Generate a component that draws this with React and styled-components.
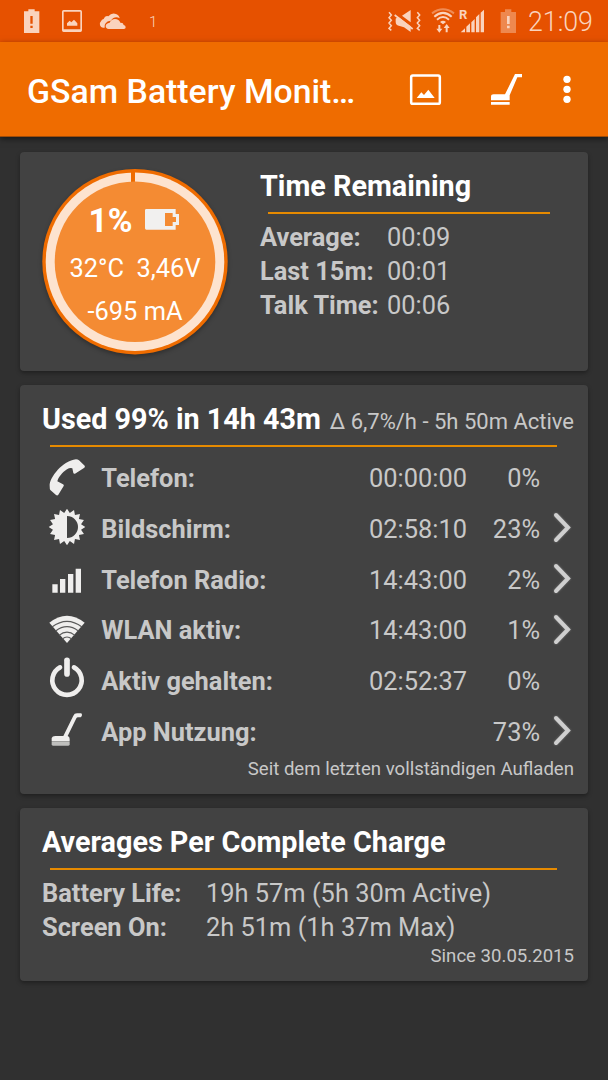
import styled, { createGlobalStyle } from 'styled-components';

const GlobalStyle = createGlobalStyle`
  body {
    margin: 0;
    background: #303030;
    font-family: Roboto, sans-serif;
    color: #c8c8c8;
  }
  svg {
    display: block;
    flex: none;
    overflow: visible;
  }
`;

const Screen = styled.div`
  width: 608px;
  height: 1080px;
  overflow: hidden;
  background: #303030;
`;

const StatusBar = styled.div`
  display: flex;
  justify-content: space-between;
  height: 42px;
  padding: 0 15px 0 23px;
  background: #e65100;
  color: #fad3bd;
  fill: #fad3bd;
  stroke: none;
`;

const StatusGroup = styled.div`
  display: flex;
  align-items: center;
`;

const StatusIcon = styled.svg`
  width: ${(p) => p.$w}px;
  height: 42px;
  margin-right: ${(p) => p.$gap}px;
`;

const Count = styled.span`
  font-size: 15px;
  font-weight: 300;
  line-height: 42px;
  padding-top: 2px;
`;

const Roaming = styled.span`
  align-self: flex-start;
  width: 0;
  margin-top: 8px;
  font-size: 13px;
  font-weight: 700;
  line-height: 14px;
`;

const Clock = styled.span`
  font-size: 26.8px;
  font-weight: 300;
  line-height: 42px;
  padding-top: 2px;
`;

const AppBar = styled.header`
  display: flex;
  align-items: center;
  height: 94px;
  padding-left: 27px;
  background: #ef6c00;
  border-bottom: 1px solid #a04c08;
  box-shadow: 0 2px 6px rgba(0, 0, 0, 0.5);
  color: #fff;
  fill: #fff;
`;

const AppTitle = styled.h1`
  width: 382px;
  margin: 0;
  padding-top: 5px;
  font-size: 33.8px;
  font-weight: 500;
  line-height: 40px;
`;

const ActionIcon = styled.svg`
  width: ${(p) => p.$w}px;
  height: 94px;
  margin-right: ${(p) => p.$gap}px;
`;

const Cards = styled.main`
  display: flex;
  flex-direction: column;
  gap: 14px;
  padding: 15px 20px;
`;

const Card = styled.section`
  box-sizing: border-box;
  height: ${(p) => p.$height}px;
  padding: 17px 14px 0 22px;
  border-radius: 4px;
  background: #424242;
  box-shadow: 0 2px 4px rgba(0, 0, 0, 0.35);
`;

const Split = styled.div`
  display: grid;
  grid-template-columns: 186px 1fr;
  column-gap: 32px;
`;

const Heading = styled.div`
  display: flex;
  justify-content: space-between;
  align-items: baseline;
  height: 34px;
  line-height: 34px;
  white-space: nowrap;
`;

const Title = styled.h2`
  margin: 0;
  font-size: 28.75px;
  font-weight: 700;
  color: #fff;
`;

const Detail = styled.span`
  font-size: 22px;
`;

const Rule = styled.hr`
  height: 2px;
  margin: 9px ${(p) => p.$right}px 6px 8.4px;
  border: 0;
  background: #e68a00;
`;

const Stat = styled.div`
  display: grid;
  grid-template-columns: ${(p) => p.$label}px 1fr;
  height: 34px;
  font-size: 25.4px;
  line-height: 34px;
  white-space: nowrap;
`;

const Label = styled.span`
  font-weight: 700;
`;

const Usage = styled.div`
  display: grid;
  grid-template-columns: 38px 200px 1fr 73px 34px;
  align-items: center;
  height: 50.67px;
  padding-left: 6px;
  font-size: 25.4px;
  line-height: 34px;
  white-space: nowrap;
`;

const UsageLabel = styled(Label)`
  padding-left: 15.3px;
`;

const Figure = styled.span`
  text-align: right;
`;

const UsageIcon = styled.svg`
  width: 38px;
  height: 38px;
  margin-top: -3px;
  fill: #efeeed;
  stroke: none;
`;

const Chevron = styled.svg`
  width: 18px;
  height: 32px;
  margin: -3px 0 0 13px;
  fill: none;
  stroke: #cfcfcf;
  stroke-width: 4;
  stroke-linecap: round;
  filter: drop-shadow(0 0 1px rgba(230, 230, 230, 0.35));
`;

const Footnote = styled.div`
  font-size: 18.6px;
  line-height: 24px;
  text-align: right;
`;

const Dial = styled.div`
  display: grid;
  width: 186px;
  height: 186px;
  color: #fff;
  > * {
    grid-area: 1 / 1;
  }
`;

const DialFace = styled.svg`
  width: 186px;
  height: 186px;
  filter: drop-shadow(0 2px 2px rgba(0, 0, 0, 0.3));
`;

const Readout = styled.div`
  position: relative;
  display: flex;
  flex-direction: column;
  align-items: center;
  padding-top: 27px;
  font-size: 25.4px;
  line-height: 43px;
  white-space: pre;
`;

const Charge = styled.div`
  display: flex;
  align-items: center;
  gap: 12px;
  height: 49px;
  margin-bottom: 2px;
  padding-right: 3px;
  font-size: 33.5px;
  font-weight: 700;

  svg {
    margin-top: -3px;
  }
`;

const usage = [
  { label: 'Telefon:', time: '00:00:00', pct: '0%', icon: 'phone' },
  { label: 'Bildschirm:', time: '02:58:10', pct: '23%', icon: 'screen', more: true },
  { label: 'Telefon Radio:', time: '14:43:00', pct: '2%', icon: 'radio', more: true },
  { label: 'WLAN aktiv:', time: '14:43:00', pct: '1%', icon: 'wlan', more: true },
  { label: 'Aktiv gehalten:', time: '02:52:37', pct: '0%', icon: 'power' },
  { label: 'App Nutzung:', time: '', pct: '73%', icon: 'apps', more: true },
];

// 16 pointed star around the screen brightness disc
const star = Array.from({ length: 32 }, (_, i) => {
  const r = i % 2 ? 43 : 55;
  const a = (i * Math.PI) / 16;
  return `${57 + r * Math.sin(a)},${57 - r * Math.cos(a)}`;
}).join(' ');

const icons = {
  phone: (
    <path d="M5 84C4 58 45 8 84 4Q89 4 93 7L110 23Q112 26 109 29L81 47Q77 48 76 45L73 31Q66 28 57 34C43 43 31 58 28 70L45 79Q49 81 47 84L31 110Q28 114 24 111L7 96Q5 94 5 84Z" />
  ),
  screen: (
    <path
      fillRule="evenodd"
      d={`M${star}ZM57 24V90A33 33 0 0 0 57 24Z`}
    />
  ),
  radio: (
    <path d="M13 76h16v25H13zM36 60h16v41H36zM60 45h16v56H60zM83 29h16v72H83z" />
  ),
  wlan: (
    <>
      <path d="M57 99L4 38Q57-4 110 38Z" />
      <g fill="none" stroke="#5a5a5a" strokeWidth="3.5">
        <path d="M12 51Q57 17 102 51M23 63Q57 37 91 63M33 76Q57 57 81 76M43 87Q57 75 71 87" />
      </g>
    </>
  ),
  power: (
    <g fill="none" stroke="#efeeed" strokeWidth="14" strokeLinecap="round">
      <path d="M36 22A44 44 0 1 0 78 22" />
      <path d="M57 1V42" strokeWidth="17" />
    </g>
  ),
  apps: (
    <>
      <path d="M11 81Q13 75 22 75H46L76 14Q79 7 87 7H99Q102 8 102 12T98 19H89Q86 19 84 24L59 75Q65 77 65 84V90H11Z" />
      <path d="M11 91H65V100Q65 104 61 104H15Q11 104 11 100Z" fill="#bfbfbd" />
    </>
  ),
};

const App = () => {
  return (
    <Screen>
      <GlobalStyle />
      <StatusBar>
        <StatusGroup>
          <StatusIcon $w={17} $gap={21} viewBox="69 0 51 126">
            <path fillRule="evenodd" d="M72 34H85V28H104V34H118V99H72ZM91 48V71H98V48ZM91 77V84H98V77Z" />
          </StatusIcon>
          <StatusIcon $w={22} $gap={16} viewBox="183 0 66 126">
            <path fillRule="evenodd" d="M191 30H241Q246 30 246 35V91Q246 96 241 96H191Q186 96 186 91V35Q186 30 191 30ZM191 35V88H241V35ZM201 77V70L209 62L214 67L222 59L232 70V77Z" />
          </StatusIcon>
          <StatusIcon $w={28} $gap={22} viewBox="297 0 84 126">
            <path d="M314 83H309A11 11 0 0 1 303 64Q305 58 311 57Q315 46 325 49Q335 37 348 42Q358 46 359 55Q350 49 340 54Q335 58 333 62Q322 61 317 70Q312 76 314 83Z" />
            <path d="M326 87Q317 86 317 78T329 68Q334 57 345 57Q357 57 361 68Q370 67 371 75Q377 76 377 82T370 87Z" />
          </StatusIcon>
          <Count>1</Count>
        </StatusGroup>
        <StatusGroup>
          <StatusIcon $w={34} $gap={10} viewBox="252 0 102 126">
            <path d="M278 56L285 50L323 79V96L303 82L290 78Q278 76 278 66ZM297 47L323 30V67Z" />
            <g fill="none" stroke="#fad3bd">
              <path d="M275 45L329 87" strokeWidth="5" />
              <path d="M258 37L265 45L258 53L265 61L258 69L265 77L258 85L265 91M343 37L350 45L343 53L350 61L343 69L350 77L343 85L350 91" strokeWidth="4.5" />
            </g>
          </StatusIcon>
          <StatusIcon $w={24} $gap={4} viewBox="384 0 72 126">
            <g fill="none" stroke="#fad3bd" strokeWidth="6">
              <path d="M387 40Q420 16 453 40" opacity=".45" />
              <path d="M394 50Q420 27 446 50M402 59Q420 43 438 59" />
            </g>
            <path d="M411 66Q420 59 429 66L420 73ZM406 75H412V86H418L409 98L400 86H406ZM428 97H434V84H440L431 72L422 84H428Z" />
          </StatusIcon>
          <Roaming>R</Roaming>
          <StatusIcon $w={26} $gap={15} viewBox="468 0 78 126">
            <path d="M473 97L486 85V97ZM490 80L501 70V97H490ZM505 67L515 57V97H505ZM519 52L529 42V97H519ZM533 38L543 29V97H533Z" />
          </StatusIcon>
          <StatusIcon $w={16} $gap={12} viewBox="591 0 48 126">
            <path d="M593 36H606V28H625V36H639V99H593Z" opacity=".42" />
            <path d="M612 48H620V72H612ZM612 77H620V85H612Z" />
          </StatusIcon>
          <Clock>21:09</Clock>
        </StatusGroup>
      </StatusBar>
      <AppBar>
        <AppTitle>GSam Battery Monit…</AppTitle>
        <ActionIcon $w={33} $gap={48} viewBox="315 126 99 282">
          <rect x="321.5" y="226.5" width="86" height="85" rx="5" fill="none" stroke="#fff" strokeWidth="7.5" />
          <path d="M338 294L352 277L360 285L373 269L392 294Z" />
        </ActionIcon>
        <ActionIcon $w={33} $gap={40} viewBox="558 126 99 282">
          <path d="M561 301V290Q561 283 569 283H603L633 222H654V232H640L617 286V301ZM561 306H617V314H561Z" />
        </ActionIcon>
        <ActionIcon $w={8} $gap={0} viewBox="778 126 24 282">
          <circle cx="790" cy="238" r="11" />
          <circle cx="790" cy="268" r="11" />
          <circle cx="790" cy="298" r="11" />
        </ActionIcon>
      </AppBar>
      <Cards>
        <Card $height={219}>
          <Split>
            <Dial>
              <DialFace viewBox="0 0 186 186">
                <circle cx="93" cy="92.7" r="92.7" fill="#ef6c00" />
                <circle cx="93" cy="92.7" r="89.3" fill="#fde3cf" />
                <path d="M89 2H93V14H89Z" fill="#ef6c00" />
                <circle cx="93" cy="92.7" r="80.3" fill="#f48b33" />
              </DialFace>
              <Readout>
                <Charge>
                  1%
                  <svg width="34" height="21" viewBox="402 207 102 63">
                    <path fill="#f1f0ef" fillRule="evenodd" d="M406 207H494V222H504V255H494V269H406Q402 269 402 265V211Q402 207 406 207ZM462 219V258H485V246H495V231H485V219Z" />
                  </svg>
                </Charge>
                <span>32°C  3,46V</span>
                <span>-695 mA</span>
              </Readout>
            </Dial>
            <div>
              <Heading>
                <Title>Time Remaining</Title>
              </Heading>
              <Rule $right={24} />
              <Stat $label={127}>
                <Label>Average:</Label>
                <span>00:09</span>
              </Stat>
              <Stat $label={127}>
                <Label>Last 15m:</Label>
                <span>00:01</span>
              </Stat>
              <Stat $label={127}>
                <Label>Talk Time:</Label>
                <span>00:06</span>
              </Stat>
            </div>
          </Split>
        </Card>
        <Card $height={409}>
          <Heading>
            <Title>Used 99% in 14h 43m</Title>
            <Detail>Δ 6,7%/h - 5h 50m Active</Detail>
          </Heading>
          <Rule $right={17} />
          {usage.map((row) => (
            <Usage key={row.label}>
              <UsageIcon viewBox="0 0 114 114">{icons[row.icon]}</UsageIcon>
              <UsageLabel>{row.label}</UsageLabel>
              <Figure>{row.time}</Figure>
              <Figure>{row.pct}</Figure>
              {row.more && (
                <Chevron viewBox="0 0 18 32">
                  <path d="M3 4L15 16.5L3 29" />
                </Chevron>
              )}
            </Usage>
          ))}
          <Footnote>Seit dem letzten vollständigen Aufladen</Footnote>
        </Card>
        <Card $height={173}>
          <Heading>
            <Title>Averages Per Complete Charge</Title>
          </Heading>
          <Rule $right={17} />
          <Stat $label={164}>
            <Label>Battery Life:</Label>
            <span>19h 57m (5h 30m Active)</span>
          </Stat>
          <Stat $label={164}>
            <Label>Screen On:</Label>
            <span>2h 51m (1h 37m Max)</span>
          </Stat>
          <Footnote>Since 30.05.2015</Footnote>
        </Card>
      </Cards>
    </Screen>
  );
};

export default App;
